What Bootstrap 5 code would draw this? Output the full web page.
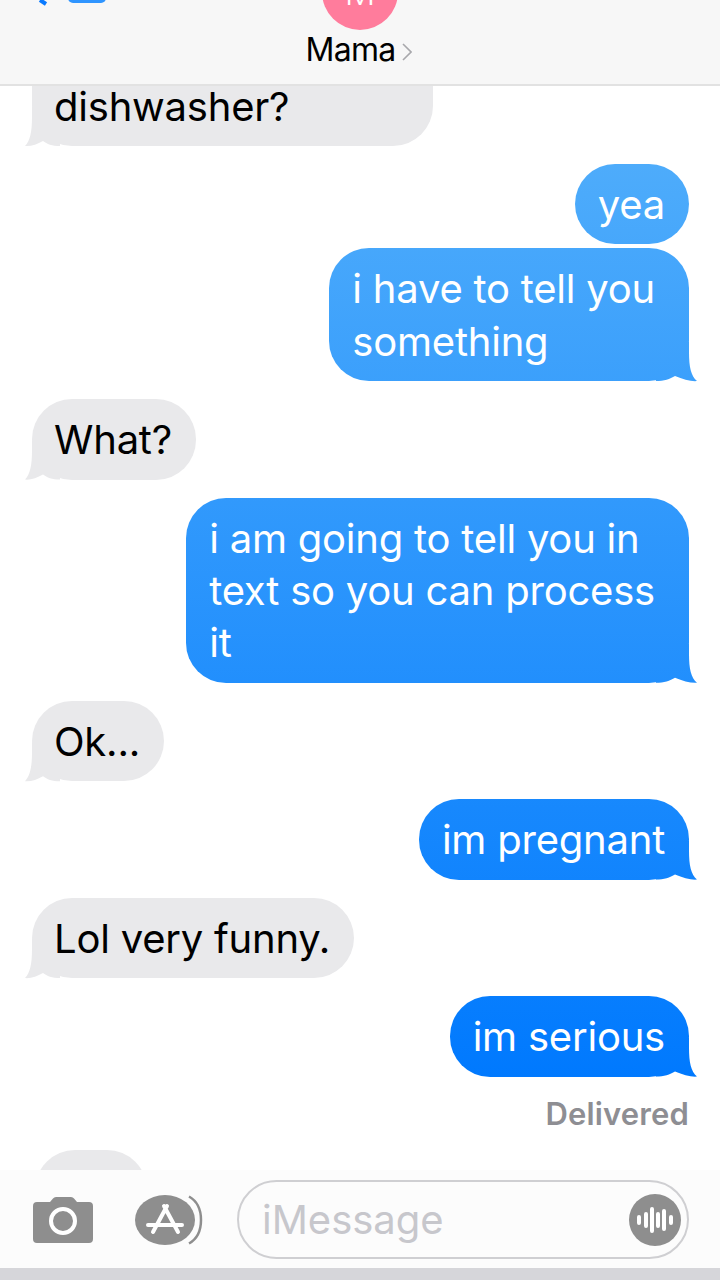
<!DOCTYPE html>
<html lang="en">
<head>
  <meta charset="UTF-8">
  <meta name="viewport" content="width=device-width, initial-scale=1.0">
  <title>Messages - Mama</title>
  <link href="https://cdn.jsdelivr.net/npm/bootstrap@5.3.0/dist/css/bootstrap.min.css" rel="stylesheet">

  <style>
    html, body {
      height: 1280px;
      overflow: hidden;
    }

    body {
      background-color: #fff;
      font-family: Inter, "Liberation Sans", sans-serif;
      color: #000;
    }

    .phone {
      height: 1280px;
    }

    /* header */
    .chat-head {
      height: 86px;
      flex: none;
      background-color: #f7f7f7;
      border-bottom: 2px solid #e2e2e2;
      overflow: hidden;
      grid-template-columns: 1fr 140px 1fr;
    }

    .back-bits {
      display: block;
      margin-left: 38px;
    }

    .avatar {
      width: 76px;
      height: 76px;
      margin-top: -46px;
      background-color: #ff7c9c;
      color: #fff;
      font-size: 34px;
      font-weight: 300;
      line-height: 78px;
      text-align: center;
    }

    .contact {
      font-size: 32px;
      line-height: 36px;
      margin-top: 2px;
      margin-right: 3px;
      letter-spacing: -0.7px;
      white-space: nowrap;
    }

    .contact svg {
      margin-left: 6px;
      vertical-align: -1px;
    }

    /* thread */
    .thread {
      padding: 0 31px 0 32px;
      overflow: hidden;
    }

    .bubble {
      position: relative;
      isolation: isolate;
      padding: 15px 24px 13px 23px;
      border-radius: 40px;
      font-size: 40px;
      line-height: 52.3px;
      letter-spacing: -0.22px;
      white-space: nowrap;
      width: fit-content;
    }

    .bubble-in {
      background-color: #e9e9eb;
      margin-top: 18.2px;
      padding-left: 22px;
    }

    .bubble-out {
      align-self: flex-end;
      color: #fff;
      margin-top: 18.2px;
      background-image: linear-gradient(#4eacfb 160px, #0079fe 1080px);
      background-attachment: fixed;
    }

    .bubble-out.same-side {
      margin-top: 4px;
    }

    .bubble-wrapped {
      padding-right: 34px;
    }

    .bubble-cut {
      width: 401px;
      margin-top: 0;
      padding-top: 0;
      padding-bottom: 18px;
      line-height: 42px;
      border-top-left-radius: 0;
      border-top-right-radius: 0;
    }

    .bubble-hidden {
      width: 112px;
      height: 80px;
      margin-top: 17px;
      margin-left: 3px;
      flex: none;
    }

    .tail::after {
      content: "";
      position: absolute;
      z-index: -1;
      bottom: -1px;
      width: 48px;
      height: 40px;
    }

    .bubble-in.tail::after {
      left: -8px;
      background-color: #e9e9eb;
      clip-path: path("M8 0V10C8 25 6 34 1 39C7 39.5 13 37.5 19 34C23 37 28 39 36 39L36 0Z");
    }

    .bubble-out.tail::after {
      right: -9px;
      background-image: inherit;
      background-attachment: fixed;
      clip-path: path("M39 0V10C39 25 41 34 47 39C41 39.5 33 37.5 25 34C20 37 14 39 6 39L6 0Z");
    }

    .delivered {
      align-self: flex-end;
      margin-top: 18px;
      color: #8e8e93;
      font-size: 31px;
      font-weight: 600;
      line-height: 38px;
      letter-spacing: 0.15px;
    }

    /* composer */
    .composer {
      flex: none;
      height: 98px;
      padding: 10px 31px 9px 33px;
      background-color: #fcfcfc;
    }

    .app-icon {
      margin-left: 42px;
      margin-right: 34px;
    }

    .msg-input {
      height: 79px;
      border: 2px solid #cfcfd2;
      border-radius: 40px;
      padding: 0 6px 0 23px;
      color: #c7c7cc;
      font-size: 40px;
      letter-spacing: 0;
    }

    .home-strip {
      height: 12px;
      flex: none;
      background-color: #d6d6da;
    }
  </style>
</head>
<body>

  <div class="phone d-flex flex-column">

    <header class="chat-head d-grid">
      <div>
        <svg class="back-bits" width="70" height="6" viewBox="0 0 70 6">
          <path d="M2 0L8 4" stroke="#0a7aff" stroke-width="4" fill="none"/>
          <rect x="30" y="-10" width="38" height="13" rx="5" fill="#2f95ff"/>
        </svg>
      </div>
      <div class="d-flex flex-column align-items-center">
        <div class="avatar rounded-circle">M</div>
        <div class="contact">Mama<svg width="10" height="20" viewBox="0 0 10 20"><path d="M1 2L9 10L1 18" stroke="#a8a8ac" stroke-width="1.6" fill="none"/></svg></div>
      </div>
      <div></div>
    </header>

    <main class="thread flex-grow-1 d-flex flex-column">
      <div class="bubble bubble-in bubble-cut tail">dishwasher?</div>

      <div class="bubble bubble-out">yea</div>
      <div class="bubble bubble-out bubble-wrapped same-side tail">i have to tell you<br>something</div>

      <div class="bubble bubble-in tail">What?</div>

      <div class="bubble bubble-out bubble-wrapped tail">i am going to tell you in<br>text so you can process<br>it</div>

      <div class="bubble bubble-in tail">Ok...</div>

      <div class="bubble bubble-out tail">im pregnant</div>

      <div class="bubble bubble-in tail">Lol very funny.</div>

      <div class="bubble bubble-out tail">im serious</div>

      <div class="delivered">Delivered</div>

      <div class="bubble bubble-in bubble-hidden"></div>
    </main>

    <footer class="composer d-flex align-items-center">
      <svg width="60" height="46" viewBox="0 0 60 46">
        <path d="M4 5H17L20 1.5Q21 0 23 0H38Q40 0 41 1.5L44 5H56Q60 5 60 9V42Q60 46 56 46H4Q0 46 0 42V9Q0 5 4 5Z" fill="#8e8e8e"/>
        <circle cx="30" cy="24" r="12" fill="none" stroke="#fff" stroke-width="4"/>
      </svg>

      <svg class="app-icon" width="68" height="50" viewBox="0 0 68 50">
        <path d="M54 1.5C62 6 66 15 66 25C66 35 62 44 54 48.5" fill="none" stroke="#8e8e8e" stroke-width="2.5"/>
        <ellipse cx="30" cy="25" rx="30" ry="25" fill="#8e8e8e"/>
        <path d="M29 11L43 37M32 11L18 37M13 30H47" stroke="#fff" stroke-width="4" stroke-linecap="round" fill="none"/>
      </svg>

      <div class="msg-input flex-grow-1 d-flex align-items-center justify-content-between">
        <span>iMessage</span>
        <svg width="52" height="52" viewBox="0 0 52 52">
          <circle cx="26" cy="26" r="26" fill="#8e8e8e"/>
          <path d="M10 23V29M17 20V32M23 15V37M29 20V32M35 17V35M42 23V29" stroke="#fff" stroke-width="4" stroke-linecap="round"/>
        </svg>
      </div>
    </footer>

    <div class="home-strip"></div>
  </div>

  <script src="https://cdn.jsdelivr.net/npm/bootstrap@5.3.0/dist/js/bootstrap.bundle.min.js"></script>
</body>
</html>
